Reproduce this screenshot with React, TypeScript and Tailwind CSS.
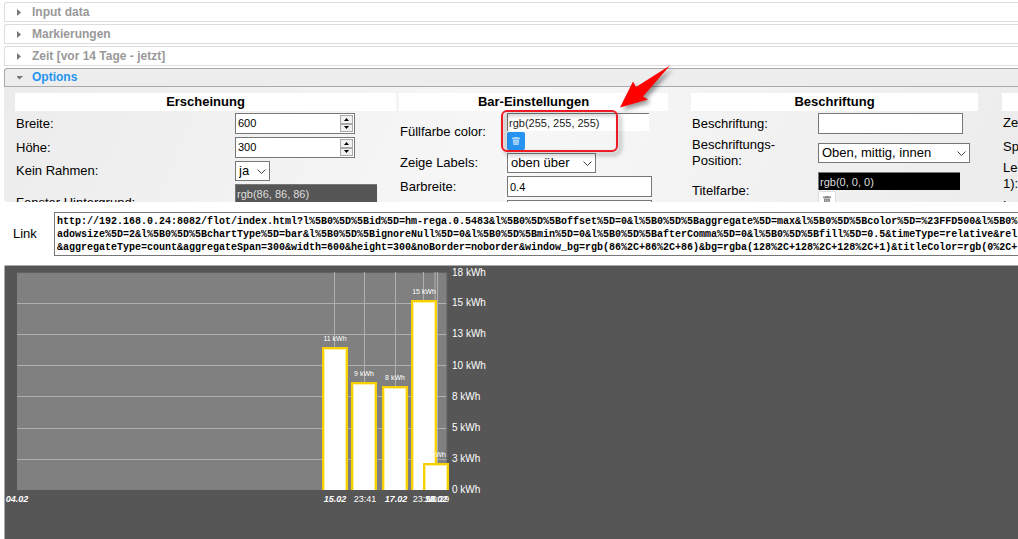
import { useState } from "react";
import type { ReactNode } from "react";

const LINK = [
  "http://192.168.0.24:8082/flot/index.html?l%5B0%5D%5Bid%5D=hm-rega.0.5483&l%5B0%5D%5Boffset%5D=0&l%5B0%5D%5Baggregate%5D=max&l%5B0%5D%5Bcolor%5D=%23FFD500&l%5B0%5D",
  "adowsize%5D=2&l%5B0%5D%5BchartType%5D=bar&l%5B0%5D%5BignoreNull%5D=0&l%5B0%5D%5Bmin%5D=0&l%5B0%5D%5BafterComma%5D=0&l%5B0%5D%5Bfill%5D=0.5&timeType=relative&rel",
  "&aggregateType=count&aggregateSpan=300&width=600&height=300&noBorder=noborder&window_bg=rgb(86%2C+86%2C+86)&bg=rgba(128%2C+128%2C+128%2C+1)&titleColor=rgb(0%2C+",
].join("\n");

const bars = [
  { x: 318, top: 82, label: "11 kWh" },
  { x: 347, top: 117, label: "9 kWh" },
  { x: 378, top: 121, label: "8 kWh" },
  { x: 407, top: 35, label: "15 kWh" },
  { x: 419, top: 198, label: "2 kWh" },
];

const yTicks = [
  { y: 7, label: "18 kWh" },
  { y: 37, label: "15 kWh" },
  { y: 68, label: "13 kWh" },
  { y: 100, label: "10 kWh" },
  { y: 131, label: "8 kWh" },
  { y: 162, label: "5 kWh" },
  { y: 193, label: "3 kWh" },
  { y: 224, label: "0 kWh" },
];

const xTicks = [
  { x: 12, label: "04.02", day: true },
  { x: 330, label: "15.02", day: true },
  { x: 360, label: "23:41", day: false },
  { x: 391, label: "17.02", day: true },
  { x: 419, label: "23:50", day: false },
  { x: 431, label: "18.02", day: true },
  { x: 433, label: "10:29", day: false },
];

function AccordionHeader({ title, open = false }: { title: string; open?: boolean }) {
  return (
    <button
      type="button"
      aria-expanded={open}
      className={`flex w-full items-center rounded-tl-[3px] border border-r-0 pl-3 text-left text-[12px] leading-4 font-bold ${
        open ? "h-[19px] border-[#aaa] bg-[#ededed] pb-0.5 text-[#2694f0]" : "h-5 border-[#ddd] bg-white text-[#999]"
      }`}
    >
      <svg width="8" height="8" viewBox="0 0 8 8" className="mr-[7px] shrink-0">
        {open ? <path d="M-1 3h7L2.500 6.500z" fill="#777" /> : <path d="M0 1v7l4-3.500z" fill="#777" />}
      </svg>
      {title}
    </button>
  );
}

function Section({ title, className, children }: { title: string; className: string; children: ReactNode }) {
  return (
    <section className={`shrink-0 ${className}`}>
      <h3 className="mb-0.5 h-[18px] bg-white text-center text-[13px] leading-[18px] font-bold">{title}</h3>
      <div className="flex flex-col gap-[3px]">{children}</div>
    </section>
  );
}

function Row({ id, label, cols, children }: { id: string; label: string; cols: string; children?: ReactNode }) {
  return (
    <div className={`grid items-center pl-px ${cols}`}>
      <label htmlFor={id} className="leading-4">
        {label}
      </label>
      <div>{children}</div>
    </div>
  );
}

function TextInput({ id, initial }: { id: string; initial: string }) {
  const [value, setValue] = useState(initial);
  return (
    <input
      id={id}
      type="text"
      value={value}
      onChange={(e) => setValue(e.target.value)}
      className="block h-[21px] w-[145px] border border-[#777] bg-white px-0.5 text-[11px] outline-none"
    />
  );
}

function NumberInput({ id, initial }: { id: string; initial: number }) {
  const [value, setValue] = useState(initial);
  return (
    <div className="flex h-[21px] w-[120px] border border-[#777] bg-white p-px">
      <input
        id={id}
        type="text"
        inputMode="numeric"
        value={value}
        onChange={(e) => setValue(Number(e.target.value) || 0)}
        className="min-w-0 flex-1 px-px text-[11px] outline-none"
      />
      <div className="flex w-[13px] flex-col">
        <button
          type="button"
          aria-label="mehr"
          onClick={() => setValue(value + 1)}
          className="flex flex-1 items-center justify-center border border-[#aaa] bg-[#f0f0f0]"
        >
          <svg width="5" height="3">
            <path d="M0 3h5L2.500 0z" />
          </svg>
        </button>
        <button
          type="button"
          aria-label="weniger"
          onClick={() => setValue(value - 1)}
          className="flex flex-1 items-center justify-center border border-[#aaa] bg-[#f0f0f0]"
        >
          <svg width="5" height="3">
            <path d="M0 0h5L2.500 3z" />
          </svg>
        </button>
      </div>
    </div>
  );
}

function Select({ id, options, className }: { id: string; options: string[]; className: string }) {
  return (
    <div className={`relative h-5 ${className}`}>
      <select
        id={id}
        className="h-full w-full appearance-none border border-[#777] bg-white pl-[3px] text-[13px] leading-[18px] outline-none"
      >
        {options.map((o) => (
          <option key={o}>{o}</option>
        ))}
      </select>
      <svg width="9" height="6" className="pointer-events-none absolute top-2 right-1">
        <path d="M.5.5l4 4 4-4" fill="none" stroke="#444" />
      </svg>
    </div>
  );
}

function ColorInput({ id, initial, className, active = false }: { id: string; initial: string; className: string; active?: boolean }) {
  const [value, setValue] = useState(initial);
  return (
    <div>
      <input
        id={id}
        type="text"
        value={value}
        onChange={(e) => setValue(e.target.value)}
        className={`block h-[18px] w-[142px] border-t border-l border-[#777] px-px text-[11px] outline-none ${className}`}
      />
      <button
        type="button"
        aria-label="Farbe löschen"
        onClick={() => setValue("")}
        className={`mt-px flex h-[18px] w-[18px] items-center justify-center rounded-[2px] ${
          active ? "bg-[#2694f0] text-[#b5d9f9]" : "border border-[#ddd] bg-white text-[#888]"
        }`}
      >
        <svg width="8" height="8" viewBox="0 0 8 8" fill="currentColor">
          <path d="M2.500 0h3v.6H8V2H0V.6h2.500zM.8 2.500h6.400L6.500 8h-5z" />
          <path d="M2.700 3.500v3.700M4 3.500v3.700M5.300 3.500v3.700" stroke={active ? "#2694f0" : "#fff"} strokeWidth=".3" />
        </svg>
      </button>
    </div>
  );
}

function Chart() {
  return (
    <svg width="500" height="273" className="block font-['Liberation_Sans',Arial,sans-serif]" role="img" aria-label="kWh">
      <rect x="12" y="6" width="430" height="218" fill="#808080" />
      <path d="M12 6.500h430" stroke="#606060" />
      <path d="M12 37.500h430M12 68.500h430M12 99.500h430M12 130.500h430M12 162.500h430M12 193.500h430" stroke="#b0b0b0" />
      <path d="M329.500 6v218M359.500 6v218M390.500 6v218M418.500 6v218M430 6v218M432.500 6v218" stroke="#b0b0b0" />
      <path d="M442 6v218" stroke="#606060" />
      {bars.map((b) => (
        <g key={b.label}>
          <path d={`M${b.x} 224V${b.top}h24V224`} fill="#fff" stroke="#f8cf00" strokeWidth="2" />
          <path d={`M${b.x + 1.5} 224V${b.top + 1.5}h21V224`} fill="none" stroke="#ffef9e" />
        </g>
      ))}
      {bars.map((b) => (
        <text key={b.label} x={b.x + 12} y={b.top - 7} fontSize="7" fill="#fff" textAnchor="middle">
          {b.label}
        </text>
      ))}
      {yTicks.map((t) => (
        <text key={t.label} x="447" y={t.y + 3} fontSize="10" fill="#fff">
          {t.label}
        </text>
      ))}
      {xTicks.map((t) => (
        <text
          key={t.label}
          x={t.x}
          y="236"
          fontSize="9"
          fill="#fff"
          textAnchor="middle"
          fontWeight={t.day ? "bold" : "normal"}
          fontStyle={t.day ? "italic" : "normal"}
        >
          {t.label}
        </text>
      ))}
    </svg>
  );
}

function Callout() {
  return (
    <svg
      width="180"
      height="96"
      className="pointer-events-none absolute top-[60px] left-[496px] drop-shadow-[3px_3px_2px_rgba(0,0,0,0.4)]"
    >
      <rect x="6" y="51" width="115" height="40" rx="5" fill="none" stroke="#ed1c24" strokeWidth="2" />
      <path d="M124 47.500L137 21.500l3 5.500L174 5.500l-27 31 5 3z" fill="#f00" />
    </svg>
  );
}

export default function App() {
  return (
    <main className="relative flex min-h-screen flex-col overflow-hidden bg-white pt-0.5 pl-1 font-['Liberation_Sans',Arial,sans-serif] text-[13px] text-black">
      <div className="flex flex-col gap-0.5">
        <AccordionHeader title="Input data" />
        <AccordionHeader title="Markierungen" />
        <AccordionHeader title="Zeit [vor 14 Tage - jetzt]" />
        <AccordionHeader title="Options" open />
      </div>

      <div className="flex h-[115px] overflow-hidden rounded-bl-[3px] bg-linear-115 from-[#ececec] via-[#f7f7f7] to-[#ececec] pt-1.5 pl-[11px]">
        <Section title="Erscheinung" className="mr-[3px] w-[381px]">
          <Row id="width" label="Breite:" cols="grid-cols-[219px_1fr]">
            <NumberInput id="width" initial={600} />
          </Row>
          <Row id="height" label="Höhe:" cols="grid-cols-[219px_1fr]">
            <NumberInput id="height" initial={300} />
          </Row>
          <Row id="noborder" label="Kein Rahmen:" cols="grid-cols-[219px_1fr]">
            <Select id="noborder" options={["ja", "nein"]} className="w-[35px]" />
          </Row>
          <Row id="window_bg" label="Fenster Hintergrund:" cols="grid-cols-[219px_1fr]">
            <ColorInput id="window_bg" initial="rgb(86, 86, 86)" className="bg-[#565656] text-[#ddd]" />
          </Row>
        </Section>

        <Section title="Bar-Einstellungen" className="mr-[23px] w-[269px]">
          <Row id="bar_color" label="Füllfarbe color:" cols="grid-cols-[107px_1fr]">
            <ColorInput id="bar_color" initial="rgb(255, 255, 255)" className="bg-white text-[#222]" active />
          </Row>
          <Row id="bar_labels" label="Zeige Labels:" cols="grid-cols-[107px_1fr]">
            <Select id="bar_labels" options={["oben über", "oben unter", "keine"]} className="w-[89px]" />
          </Row>
          <Row id="bar_width" label="Barbreite:" cols="grid-cols-[107px_1fr]">
            <TextInput id="bar_width" initial="0.4" />
          </Row>
          <Row id="bar_font" label="" cols="grid-cols-[107px_1fr]">
            <TextInput id="bar_font" initial="" />
          </Row>
        </Section>

        <Section title="Beschriftung" className="mr-6 w-[287px]">
          <Row id="title" label="Beschriftung:" cols="grid-cols-[126px_1fr]">
            <TextInput id="title" initial="" />
          </Row>
          <Row id="title_pos" label="Beschriftungs-Position:" cols="grid-cols-[126px_1fr]">
            <Select id="title_pos" options={["Oben, mittig, innen", "Oben, links, innen"]} className="w-[152px]" />
          </Row>
          <Row id="title_color" label="Titelfarbe:" cols="grid-cols-[126px_1fr]">
            <ColorInput id="title_color" initial="rgb(0, 0, 0)" className="bg-black text-[#ddd]" />
          </Row>
        </Section>

        <Section title="Legende" className="w-[287px]">
          <Row id="legend" label="Zeige Legende:" cols="grid-cols-[126px_1fr]">
            <Select id="legend" options={["nein", "ja"]} className="w-[89px]" />
          </Row>
          <Row id="legend_cols" label="Spaltenanzahl:" cols="grid-cols-[126px_1fr]">
            <TextInput id="legend_cols" initial="" />
          </Row>
          <Row id="legend_opacity" label="Legendenopazität (0-1):" cols="grid-cols-[126px_1fr]">
            <TextInput id="legend_opacity" initial="" />
          </Row>
          <Row id="legend_bg" label="Legendenfarbe:" cols="grid-cols-[126px_1fr]">
            <TextInput id="legend_bg" initial="" />
          </Row>
        </Section>
      </div>

      <div className="mt-[10px] flex items-center">
        <label htmlFor="link" className="w-[50px] pl-[9px]">
          Link
        </label>
        <textarea
          id="link"
          readOnly
          rows={3}
          wrap="off"
          value={LINK}
          className="block h-11 flex-1 resize-none overflow-hidden border border-r-0 border-[#777] bg-white px-0.5 py-0.5 font-['Liberation_Mono','Courier_New',monospace] text-[10px] leading-[13px] font-bold outline-none"
        />
      </div>

      <div className="mt-[9px] flex-1 overflow-hidden rounded-tl-[2px] border-t border-l border-[#aaa] bg-[#565656]">
        <Chart />
      </div>

      <Callout />
    </main>
  );
}
